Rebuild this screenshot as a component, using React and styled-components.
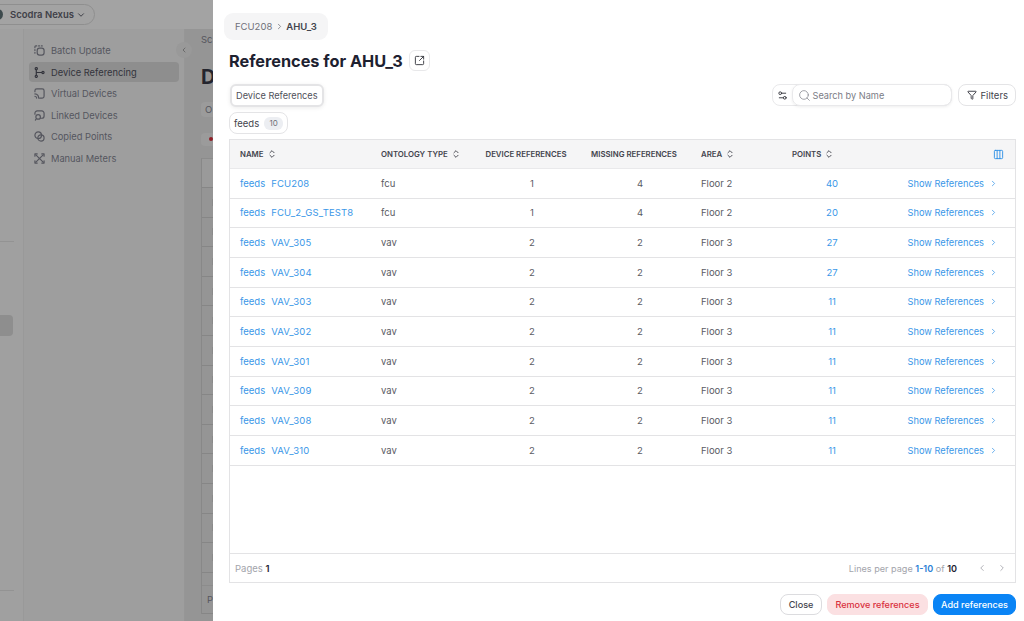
import React from 'react'
import styled, { createGlobalStyle } from 'styled-components'
import {
  ChevronDown,
  ChevronLeft,
  ChevronRight,
  ChevronsUpDown,
  Columns3,
  Filter,
  Search,
  Settings2,
  SquareArrowOutUpRight
} from 'lucide-react'

const GlobalStyle = createGlobalStyle`
  html, body {
    margin: 0;
    padding: 0;
    height: 100%;
    overflow: hidden;
    background: #fff;
    font-family: Inter, "Noto Sans", sans-serif;
  }
  * { box-sizing: border-box; }
`

const Page = styled.div`
  display: flex;
  width: 1024px;
  height: 621px;
  overflow: hidden;
`

const Backdrop = styled.div`
  flex: 0 0 213px;
  display: flex;
  flex-direction: column;
  background: #9e9e9e;
  overflow: hidden;
`

const TopBar = styled.div`
  flex: 0 0 29px;
  display: flex;
  align-items: center;
  background: #a3a3a3;
  box-shadow: 0 1px 3px rgba(0, 0, 0, 0.06);
`

const OrgPill = styled.div`
  display: flex;
  align-items: center;
  gap: 2px;
  height: 21px;
  margin-left: -17px;
  padding: 0 8px;
  border: 1px solid #8f8f8f;
  border-radius: 11px;
  color: #3f4048;
  font-size: 9.5px;
  font-weight: 600;
`

const OrgLogo = styled.span`
  width: 11px;
  height: 11px;
  margin-right: 5px;
  border-radius: 50%;
  background: #3d4a4d;
`

const BackBody = styled.div`
  flex: 1;
  display: flex;
  min-height: 0;
`

const Rail = styled.div`
  flex: 0 0 24px;
  display: flex;
  flex-direction: column;
  padding-top: 212px;
  background: #a0a0a0;
  border-right: 1px solid #999;
`

const RailLine = styled.div`
  width: 14px;
  height: 1px;
  background: #939393;
`

const RailPill = styled.div`
  width: 13px;
  height: 21px;
  margin-top: 73px;
  margin-bottom: 254px;
  border-radius: 0 4px 4px 0;
  background: #8e8e8e;
`

const Sidebar = styled.nav`
  position: relative;
  flex: 0 0 161px;
  display: flex;
  flex-direction: column;
  gap: 1.5px;
  padding: 11.5px 5px 0 5px;
  background: #9e9e9e;
  border-right: 1px solid #969696;
`

const NavItem = styled.div`
  display: flex;
  align-items: center;
  gap: 6px;
  height: 20px;
  padding-left: 5px;
  border-radius: 4px;
  font-size: 9.3px;
  color: ${({ active }) => (active ? '#33343c' : '#55565e')};
  background: ${({ active }) => (active ? '#8e8e8e' : 'transparent')};
`

const NavGlyph = styled.svg`
  flex: 0 0 11px;
  width: 11px;
  height: 11px;
  fill: none;
  stroke: currentColor;
  stroke-width: 1.3;
  stroke-linecap: round;
  stroke-linejoin: round;
`

const CollapseKnob = styled.div`
  position: absolute;
  top: 13px;
  right: -8px;
  display: flex;
  align-items: center;
  justify-content: center;
  width: 16px;
  height: 16px;
  border-radius: 50%;
  background: #999;
  color: #555;
`

const BackMain = styled.div`
  flex: 1;
  display: flex;
  flex-direction: column;
  padding-left: 16px;
  background: #959595;
  overflow: hidden;
  white-space: nowrap;
`

const Crumb = styled.div`
  margin-top: 5px;
  font-size: 9.5px;
  color: #55565e;
`

const BackHeading = styled.div`
  margin-top: 20px;
  font-size: 20px;
  font-weight: 700;
  color: #24252e;
`

const BackTab = styled.div`
  margin-top: 13px;
  padding: 2px 4px;
  border-radius: 4px 0 0 4px;
  background: #9b9b9b;
  font-size: 9.5px;
  color: #55565e;
`

const BackStatus = styled.div`
  flex: 0 0 13px;
  display: flex;
  align-items: center;
  margin-top: 15.5px;
  padding-left: 8px;
  border-radius: 4px 0 0 4px;
  background: #9b9b9b;
`

const RedDot = styled.span`
  width: 4px;
  height: 4px;
  border-radius: 50%;
  background: #8f1f28;
`

const BackTable = styled.div`
  flex: 1;
  display: flex;
  flex-direction: column;
  margin-top: 12.5px;
  margin-bottom: 7px;
  border-left: 1px solid #888;
  border-top: 1px solid #8c8c8c;
`

const BackHead = styled.div`
  flex: 0 0 28px;
  background: #9a9a9a;
`

const BackRow = styled.div`
  flex: 0 0 29.6px;
  display: flex;
  align-items: center;
  padding-left: 10px;
  border-top: 1px solid #868686;
`

const BackCellMark = styled.span`
  width: 2px;
  height: 7px;
  background: #8a8a8a;
`

const BackGap = styled.div`
  flex: 0 0 13px;
  border-top: 1px solid #868686;
`

const BackFooter = styled.div`
  flex: 1;
  display: flex;
  align-items: center;
  padding-left: 5px;
  border-top: 1px solid #8c8c8c;
  border-bottom: 1px solid #868686;
  font-size: 9.5px;
  color: #55565e;
`

const Sheet = styled.section`
  flex: 1;
  display: flex;
  flex-direction: column;
  padding: 13px 8px 0 16px;
  background: #fff;
`

const Breadcrumb = styled.div`
  align-self: flex-start;
  display: flex;
  align-items: center;
  gap: 2.5px;
  height: 27px;
  margin-left: -5px;
  padding: 0 11px;
  border-radius: 9px;
  background: #f5f5f6;
  font-size: 9.5px;
  color: #6f7079;
`

const BreadcrumbCurrent = styled.span`
  font-weight: 600;
  color: #43444d;
`

const TitleRow = styled.div`
  display: flex;
  align-items: center;
  gap: 6.5px;
  margin-top: 10px;
  height: 21px;
`

const Title = styled.h1`
  margin: 0;
  font-size: 16.3px;
  font-weight: 700;
  color: #1d2130;
`

const IconButton = styled.button`
  display: flex;
  align-items: center;
  justify-content: center;
  width: 21px;
  height: 21px;
  padding: 0;
  border: 1px solid #e8e8ea;
  border-radius: 6px;
  background: #fff;
  color: #33343c;
`

const Toolbar = styled.div`
  display: flex;
  align-items: center;
  justify-content: space-between;
  margin-top: 13px;
  height: 22px;
`

const Tab = styled.div`
  display: flex;
  align-items: center;
  height: 23px;
  margin-left: 1px;
  padding: 0 4px;
  border: 2px solid #e4e4e6;
  border-radius: 6px;
  background: #fff;
  box-shadow: 0 1px 4px rgba(0, 0, 0, 0.08);
  font-size: 9.2px;
  color: #50515a;
`

const Tools = styled.div`
  display: flex;
  align-items: center;
  gap: 6px;
`

const SearchGroup = styled.div`
  display: flex;
  align-items: center;
  height: 22px;
  border: 1px solid #e9e9eb;
  border-radius: 8px;
`

const SearchToggle = styled.div`
  display: flex;
  align-items: center;
  justify-content: center;
  width: 19px;
  color: #33343c;
`

const SearchField = styled.div`
  display: flex;
  align-items: center;
  gap: 2px;
  width: 160px;
  height: 22px;
  margin-right: -1px;
  padding-left: 5px;
  border: 1px solid #e9e9eb;
  border-radius: 8px;
  box-shadow: 0 1px 3px rgba(0, 0, 0, 0.07);
  font-size: 9.2px;
  color: #7b7c85;
`

const FilterButton = styled.button`
  display: flex;
  align-items: center;
  gap: 4px;
  height: 22px;
  padding: 0 7px 0 8px;
  border: 1px solid #e4e4e6;
  border-radius: 8px;
  background: #fff;
  font-family: inherit;
  font-size: 9.5px;
  color: #43444d;
`

const ChipRow = styled.div`
  display: flex;
  margin-top: 6px;
`

const Chip = styled.div`
  display: flex;
  align-items: center;
  gap: 5px;
  height: 22px;
  padding: 0 4px;
  border: 1px solid #e4e4e6;
  border-radius: 8px;
  font-size: 9.5px;
  color: #43444d;
`

const ChipCount = styled.span`
  display: flex;
  align-items: center;
  justify-content: center;
  width: 19px;
  height: 13px;
  border-radius: 6px;
  background: #eceef2;
  font-size: 8px;
  color: #6f7079;
`

const Table = styled.div`
  flex: 0 0 444px;
  display: flex;
  flex-direction: column;
  margin-top: 5px;
  border: 1px solid #e3e3e5;
`

const columns = '151px 90px 110px 106px 105px 46px 1fr'

const HeaderRow = styled.div`
  flex: 0 0 29px;
  display: grid;
  grid-template-columns: ${columns};
  align-items: center;
  background: #f5f5f6;
  border-bottom: 1px solid #e9e9eb;
  font-size: 7.8px;
  font-weight: 600;
  color: #43444d;
  white-space: nowrap;
`

const Row = styled.div`
  flex: 0 0 29.67px;
  display: grid;
  grid-template-columns: ${columns};
  align-items: center;
  border-bottom: 1px solid #e3e3e5;
  font-size: 9.5px;
  color: #5a5b64;
  white-space: nowrap;
`

const Cell = styled.div`
  display: flex;
  align-items: center;
  gap: 3px;
  padding-left: ${({ inset }) => inset || 0}px;
  justify-content: ${({ align }) => align || 'flex-start'};
`

const Link = styled.span`
  color: #3a97e8;
`

const NameLink = styled(Link)`
  margin-left: 3px;
  letter-spacing: 0.15px;
`

const ShowLink = styled(Link)`
  display: flex;
  align-items: center;
  gap: 5px;
  padding-right: 17px;
  font-size: 9.25px;
`

const ColumnsIcon = styled.span`
  display: flex;
  padding-right: 11px;
  color: #2c8fe6;
`

const Spacer = styled.div`
  flex: 1;
`

const Footer = styled.div`
  flex: 0 0 29px;
  display: flex;
  align-items: center;
  justify-content: space-between;
  padding: 0 8px 0 5px;
  border-top: 1px solid #e3e3e5;
  font-size: 9.5px;
  color: #a3a4ab;
`

const Strong = styled.b`
  font-weight: 600;
  color: #1d2130;
`

const Range = styled.b`
  font-weight: 600;
  color: #2c7fd6;
`

const Pager = styled.div`
  display: flex;
  align-items: center;
  gap: 10px;
  color: #a3a4ab;
`

const LinesText = styled.span`
  margin-right: 10px;
  font-size: 9.1px;
`

const Actions = styled.div`
  display: flex;
  justify-content: flex-end;
  gap: 5.5px;
  margin-top: 11px;
`

const ActionButton = styled.button`
  height: 21px;
  padding: 0 ${({ pad }) => pad}px;
  border: 1px solid ${({ border }) => border};
  border-radius: 8px;
  background: ${({ bg }) => bg};
  color: ${({ fg }) => fg};
  font-family: inherit;
  font-size: 9.1px;
  font-weight: 500;
`

const BatchIcon = () => (
  <NavGlyph viewBox='0 0 12 12'>
    <path d='M1 3V2a1 1 0 0 1 1-1h1M5 1h1M8 1h1M1 5v1M1 8v1' />
    <rect x='3.5' y='3.5' width='7.5' height='7.5' rx='2.5' />
  </NavGlyph>
)

const ReferenceIcon = () => (
  <NavGlyph viewBox='0 0 12 12'>
    <circle cx='2.5' cy='1.8' r='1.2' />
    <circle cx='2.5' cy='10.2' r='1.2' />
    <circle cx='9.8' cy='6' r='1.2' />
    <path d='M2.5 3v6M2.5 6h6' />
  </NavGlyph>
)

const VirtualIcon = () => (
  <NavGlyph viewBox='0 0 12 12'>
    <path d='M1 4V3a2 2 0 0 1 2-2h6a2 2 0 0 1 2 2v6a2 2 0 0 1-2 2H6' />
    <path d='M1 6.5A4.5 4.5 0 0 1 5 11M1 9a2 2 0 0 1 1.8 2' />
  </NavGlyph>
)

const LinkedIcon = () => (
  <NavGlyph viewBox='0 0 12 12'>
    <path d='M1 4.5V3.5a2.5 2.5 0 0 1 2.5-2.5h5A2.5 2.5 0 0 1 11 3.5v3A2.5 2.5 0 0 1 8.5 9H7' />
    <circle cx='4.5' cy='7.5' r='2.5' />
    <path d='M2.5 9.5L1.5 11' />
  </NavGlyph>
)

const CopiedIcon = () => (
  <NavGlyph viewBox='0 0 12 12'>
    <circle cx='4.6' cy='4.6' r='3.6' />
    <circle cx='7.6' cy='7.6' r='3.4' />
  </NavGlyph>
)

const MetersIcon = () => (
  <NavGlyph viewBox='0 0 12 12'>
    <path d='M1 3.5V1h2.5M8.5 1H11v2.5M11 8.5V11H8.5M3.5 11H1V8.5' />
    <path d='M2 2l8 8M10 2l-8 8' />
  </NavGlyph>
)

const navItems = [
  { label: 'Batch Update', Icon: BatchIcon },
  { label: 'Device Referencing', Icon: ReferenceIcon, active: true },
  { label: 'Virtual Devices', Icon: VirtualIcon },
  { label: 'Linked Devices', Icon: LinkedIcon },
  { label: 'Copied Points', Icon: CopiedIcon },
  { label: 'Manual Meters', Icon: MetersIcon }
]

const references = [
  { name: 'FCU208', type: 'fcu', device: 1, missing: 4, area: 'Floor 2', points: 40 },
  { name: 'FCU_2_GS_TEST8', type: 'fcu', device: 1, missing: 4, area: 'Floor 2', points: 20 },
  { name: 'VAV_305', type: 'vav', device: 2, missing: 2, area: 'Floor 3', points: 27 },
  { name: 'VAV_304', type: 'vav', device: 2, missing: 2, area: 'Floor 3', points: 27 },
  { name: 'VAV_303', type: 'vav', device: 2, missing: 2, area: 'Floor 3', points: 11 },
  { name: 'VAV_302', type: 'vav', device: 2, missing: 2, area: 'Floor 3', points: 11 },
  { name: 'VAV_301', type: 'vav', device: 2, missing: 2, area: 'Floor 3', points: 11 },
  { name: 'VAV_309', type: 'vav', device: 2, missing: 2, area: 'Floor 3', points: 11 },
  { name: 'VAV_308', type: 'vav', device: 2, missing: 2, area: 'Floor 3', points: 11 },
  { name: 'VAV_310', type: 'vav', device: 2, missing: 2, area: 'Floor 3', points: 11 }
]

const backRows = Array.from({ length: 13 }, (_, i) => i)

const Sort = () => <ChevronsUpDown size={10} strokeWidth={2.2} />

function BackgroundPage () {
  return (
    <Backdrop>
      <TopBar>
        <OrgPill>
          <OrgLogo />
          Scodra Nexus
          <ChevronDown size={10} strokeWidth={2.4} />
        </OrgPill>
      </TopBar>
      <BackBody>
        <Rail>
          <RailLine />
          <RailPill />
          <RailLine />
        </Rail>
        <Sidebar>
          {navItems.map(({ label, Icon, active }) => (
            <NavItem key={label} active={active}>
              <Icon />
              {label}
            </NavItem>
          ))}
          <CollapseKnob>
            <ChevronLeft size={8} />
          </CollapseKnob>
        </Sidebar>
        <BackMain>
          <Crumb>Sc</Crumb>
          <BackHeading>D</BackHeading>
          <BackTab>O</BackTab>
          <BackStatus>
            <RedDot />
          </BackStatus>
          <BackTable>
            <BackHead />
            {backRows.map(i => (
              <BackRow key={i}>
                <BackCellMark />
              </BackRow>
            ))}
            <BackGap />
            <BackFooter>P</BackFooter>
          </BackTable>
        </BackMain>
      </BackBody>
    </Backdrop>
  )
}

export default function App () {
  return (
    <Page>
      <GlobalStyle />
      <BackgroundPage />
      <Sheet>
        <Breadcrumb>
          FCU208
          <ChevronRight size={9} />
          <BreadcrumbCurrent>AHU_3</BreadcrumbCurrent>
        </Breadcrumb>
        <TitleRow>
          <Title>References for AHU_3</Title>
          <IconButton>
            <SquareArrowOutUpRight size={11} />
          </IconButton>
        </TitleRow>
        <Toolbar>
          <Tab>Device References</Tab>
          <Tools>
            <SearchGroup>
              <SearchToggle>
                <Settings2 size={11} strokeWidth={2} />
              </SearchToggle>
              <SearchField>
                <Search size={13} strokeWidth={1.3} />
                Search by Name
              </SearchField>
            </SearchGroup>
            <FilterButton>
              <Filter size={10} strokeWidth={2.4} />
              Filters
            </FilterButton>
          </Tools>
        </Toolbar>
        <ChipRow>
          <Chip>
            feeds
            <ChipCount>10</ChipCount>
          </Chip>
        </ChipRow>
        <Table>
          <HeaderRow>
            <Cell inset={10}>NAME <Sort /></Cell>
            <Cell>ONTOLOGY TYPE <Sort /></Cell>
            <Cell align='center'>DEVICE REFERENCES</Cell>
            <Cell align='center'>MISSING REFERENCES</Cell>
            <Cell inset={14}>AREA <Sort /></Cell>
            <Cell>POINTS <Sort /></Cell>
            <Cell align='flex-end'>
              <ColumnsIcon><Columns3 size={11} /></ColumnsIcon>
            </Cell>
          </HeaderRow>
          {references.map(row => (
            <Row key={row.name}>
              <Cell inset={10}>
                <Link>feeds</Link>
                <NameLink>{row.name}</NameLink>
              </Cell>
              <Cell>{row.type}</Cell>
              <Cell align='center' inset={12}>{row.device}</Cell>
              <Cell align='center' inset={12}>{row.missing}</Cell>
              <Cell inset={14}>{row.area}</Cell>
              <Cell align='center' inset={34}><Link>{row.points}</Link></Cell>
              <Cell align='flex-end'>
                <ShowLink>
                  Show References
                  <ChevronRight size={9} />
                </ShowLink>
              </Cell>
            </Row>
          ))}
          <Spacer />
          <Footer>
            <span>Pages <Strong>1</Strong></span>
            <Pager>
              <LinesText>Lines per page <Range>1-10</Range> of <Strong>10</Strong></LinesText>
              <ChevronLeft size={10} />
              <ChevronRight size={10} />
            </Pager>
          </Footer>
        </Table>
        <Actions>
          <ActionButton pad={7.5} border='#dcdcdf' bg='#fff' fg='#43444d'>Close</ActionButton>
          <ActionButton pad={7} border='#fbe0e2' bg='#fbe0e2' fg='#d9303e'>Remove references</ActionButton>
          <ActionButton pad={7} border='#0a84f5' bg='#0a84f5' fg='#fff'>Add references</ActionButton>
        </Actions>
      </Sheet>
    </Page>
  )
}
